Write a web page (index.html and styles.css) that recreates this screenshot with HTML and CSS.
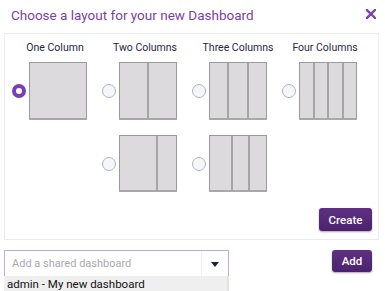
FILE: index.html
```html
<!DOCTYPE html>
<html>
<head>
<meta charset="utf-8">
<link rel="stylesheet" href="styles.css">
</head>
<body>
<div class="dialog">
  <div class="header">
    <h1 class="title">Choose a layout for your new Dashboard</h1>
    <svg class="close" width="10" height="10" viewBox="0 0 10 10" aria-label="close"><path d="M1 1 L9 9 M9 1 L1 9" stroke="#7b3fb5" stroke-width="2.4" stroke-linecap="square"/></svg>
  </div>
  <div class="panel">
    <div class="grid">
      <div class="cell">
        <div class="label l1">One Column</div>
        <div class="opt">
          <span class="radio checked"></span>
          <div class="box"><span class="col" style="flex:1"></span></div>
        </div>
      </div>
      <div class="cell">
        <div class="label l2">Two Columns</div>
        <div class="opt">
          <span class="radio"></span>
          <div class="box"><span class="col" style="flex:1"></span><span class="col" style="flex:1"></span></div>
        </div>
      </div>
      <div class="cell">
        <div class="label">Three Columns</div>
        <div class="opt">
          <span class="radio"></span>
          <div class="box"><span class="col" style="flex:1"></span><span class="col" style="flex:1"></span><span class="col" style="flex:1"></span></div>
        </div>
      </div>
      <div class="cell">
        <div class="label l4">Four Columns</div>
        <div class="opt">
          <span class="radio"></span>
          <div class="box"><span class="col" style="flex:1"></span><span class="col" style="flex:1"></span><span class="col" style="flex:1"></span><span class="col" style="flex:1"></span></div>
        </div>
      </div>
      <div class="cell c2">
        <div class="opt">
          <span class="radio"></span>
          <div class="box short"><span class="col" style="flex:2"></span><span class="col" style="flex:1"></span></div>
        </div>
      </div>
      <div class="cell c3">
        <div class="opt">
          <span class="radio"></span>
          <div class="box short"><span class="col" style="flex:4"></span><span class="col" style="flex:3"></span><span class="col" style="flex:3"></span></div>
        </div>
      </div>
    </div>
    <div class="actions">
      <button class="btn create">Create</button>
    </div>
  </div>
  <div class="shared">
    <div class="combo">
      <div class="select">
        <span class="placeholder">Add a shared dashboard</span>
        <span class="arrow"></span>
      </div>
      <div class="option">admin - My new dashboard</div>
    </div>
    <button class="btn add">Add</button>
  </div>
</div>
</body>
</html>
```
FILE: styles.css
```css
* { box-sizing: border-box; }
html, body { margin: 0; padding: 0; background: #fff; }
body { font-family: Roboto, "Noto Sans", sans-serif; width: 385px; height: 291px; overflow: hidden; }

.dialog { display: flex; flex-direction: column; }

.header {
  height: 33px;
  display: flex;
  align-items: center;
  justify-content: space-between;
  padding: 0 9px 3px 11px;
}
.title {
  margin: 0;
  font-size: 13.5px;
  font-weight: 400;
  color: #7b3fa8;
  line-height: 16px;
}
.close { display: block; margin-top: -3px; }

.panel {
  margin: 0 6px 0 4px;
  border: 1px solid #ececec;
  height: 207px;
  display: flex;
  flex-direction: column;
  padding: 7px 6px 8px 0;
}
.grid {
  display: grid;
  grid-template-columns: repeat(4, 90px);
  row-gap: 15px;
}
.c2 { grid-column: 2; }
.c3 { grid-column: 3; }

.label {
  font-size: 10.5px;
  line-height: 14px;
  color: #1e2746;
  margin-left: 24px;
  width: 58px;
  margin-bottom: 7px;
  white-space: nowrap;
  display: flex;
  justify-content: center;
}
.l1 { margin-left: 21px; }
.l2 { margin-left: 21px; }
.l4 { margin-left: 21px; }

.opt {
  display: flex;
  align-items: center;
  padding-left: 7px;
}
.radio {
  width: 14px;
  height: 14px;
  border-radius: 50%;
  border: 1px solid #aab3c8;
  background: #f6f6f9;
  margin-right: 3px;
  flex: none;
}
.radio.checked {
  border: 4px solid #7a3db5;
  background: #fff;
}
.box {
  width: 58px;
  height: 58px;
  display: flex;
  border: 1px solid #9a9a9a;
  border-bottom-width: 2px;
  border-bottom-color: #a8a8a8;
  background: #dcdadd;
}
.box.short { height: 57px; }
.col { display: block; height: 100%; border-left: 2px solid #a5a5a5; }
.col:first-child { border-left: none; }

.actions {
  margin-top: auto;
  display: flex;
  justify-content: flex-end;
}
.btn {
  font-family: Roboto, "Noto Sans", sans-serif;
  color: #fff;
  border: none;
  border-radius: 3px;
  background: linear-gradient(#5f3082, #4c2270);
  box-shadow: 0 1px 2px rgba(0,0,0,0.35);
  font-size: 11.5px;
  font-weight: 500;
  padding: 0;
}
.create { width: 53px; height: 23px; }

.shared {
  margin-top: 10px;
  display: flex;
  align-items: flex-start;
  padding-left: 4px;
}
.combo { width: 225px; }
.select {
  height: 26px;
  border: 1px solid #c6a6df;
  border-bottom: none;
  display: flex;
  align-items: center;
  background: #fff;
}
.placeholder {
  flex: 1;
  padding-left: 7px;
  font-size: 11px;
  color: #a9a9b0;
}
.arrow {
  width: 27px;
  height: 100%;
  border-left: 1px solid #f0f0f0;
  display: flex;
  align-items: center;
  justify-content: center;
}
.arrow::after {
  content: "";
  border-left: 4px solid transparent;
  border-right: 4px solid transparent;
  border-top: 5px solid #1a1f3a;
  margin-top: 1px;
}
.option {
  height: 16px;
  background: #efefef;
  font-size: 11.5px;
  line-height: 16px;
  padding-left: 3px;
  color: #111;
  border-right: 2px solid #e2e2e2;
}
.add { width: 40px; height: 22px; margin-left: 103px; }
```
